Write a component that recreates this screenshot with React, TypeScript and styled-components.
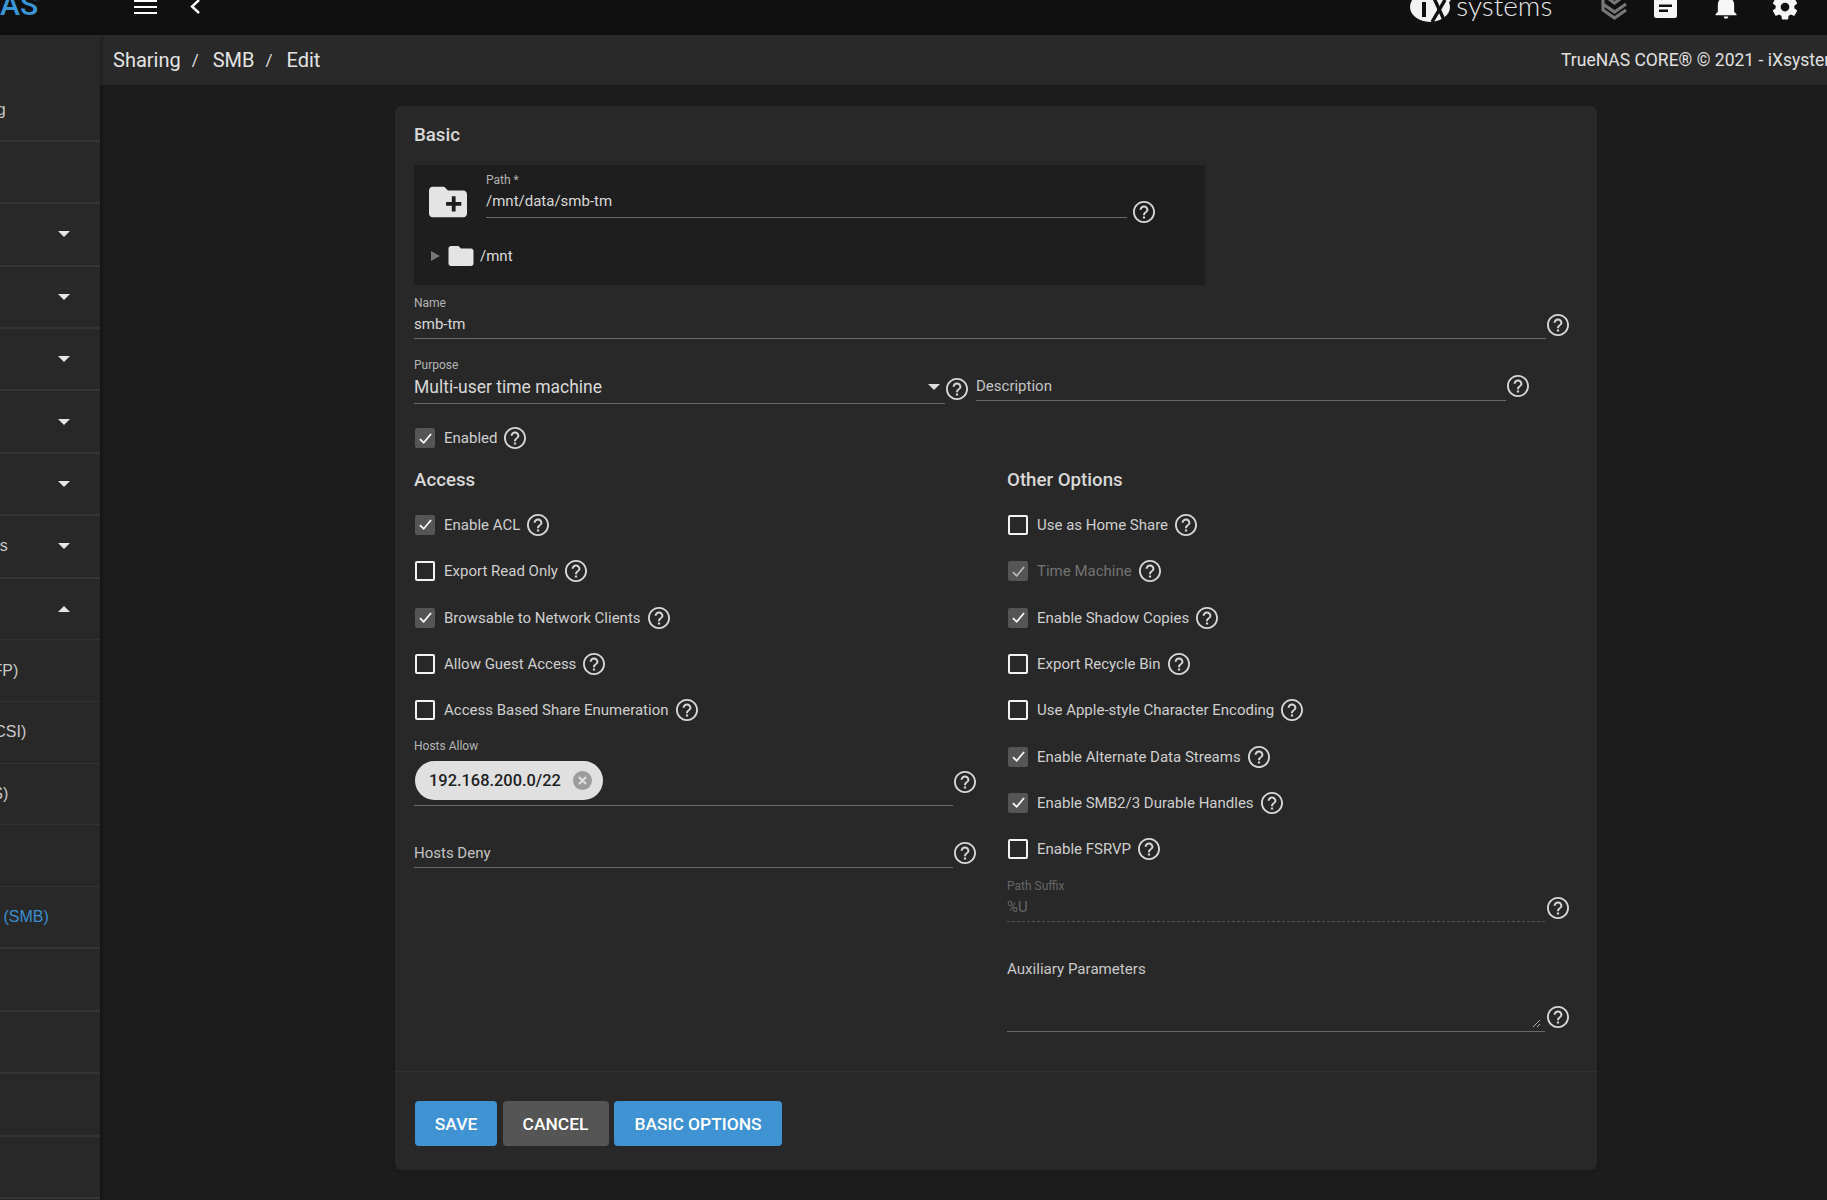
import React from "react";
import styled, { createGlobalStyle } from "styled-components";

const Global = createGlobalStyle`
  html, body { margin: 0; padding: 0; background: #1c1c1c; }
  body { font-family: Roboto, "Liberation Sans", sans-serif; color: #ccc; overflow: hidden; height: 1200px; }
  * { box-sizing: border-box; }
`;

const Page = styled.div`display: flex; flex-direction: column; width: 1827px; height: 1200px; overflow: hidden;`;

/* top bar */
const TopBar = styled.header`
  flex: none; height: 35px; background: #101010; display: flex; align-items: flex-end; overflow: hidden;
`;
const Logo = styled.div`
  width: 134px; flex: none; height: 30px; margin-bottom: 15px; font-size: 30px; line-height: 30px; font-weight: 500; color: #3b96d8;
`;
const Burger = styled.div`
  width: 23px; height: 14px; margin-bottom: 21px; flex: none; display: flex; flex-direction: column; justify-content: space-between;
  & > i { display: block; height: 2px; background: #fff; }
`;
const Back = styled.svg`width: 10px; height: 15px; margin: 0 0 21px 33px; flex: none;`;
const Spacer = styled.div`flex: 1;`;
const Brand = styled.div`display: flex; align-items: flex-end; margin-bottom: 12px; flex: none;`;
const BrandMark = styled.svg`width: 46px; height: 26px; flex: none; margin-bottom: 1px;`;
const BrandWord = styled.div`
  font-family: Lato, Roboto, sans-serif; font-weight: 300; font-size: 28px; line-height: 26px; color: #e6e6e6; margin: 0 0 5px 0;
  & > sup { font-size: 5px; vertical-align: top; line-height: 12px; }
`;
const TopIcon = styled.svg<{ $w: number; $h: number; $b: number; $l: number; $r?: number }>`
  flex: none; width: ${p => p.$w}px; height: ${p => p.$h}px; margin-bottom: ${p => p.$b}px; margin-left: ${p => p.$l}px; margin-right: ${p => p.$r ?? 0}px;
`;

/* body */
const Body = styled.div`flex: 1; display: flex; min-height: 0;`;
const Sidebar = styled.nav`
  flex: none; width: 100px; background: #282828; overflow: hidden; padding-top: 44.5px; box-shadow: 2px 0 4px rgba(0,0,0,.25); position: relative; z-index: 1;
`;
const SideList = styled.div`width: 240px; margin-left: -140px;`;
const SideRow = styled.div<{ $thin?: boolean; $indent: number; $active?: boolean }>`
  height: ${p => (p.$thin ? 61.7 : 62.4)}px; display: flex; align-items: center; justify-content: space-between; padding: 0 30px 0 ${p => p.$indent}px;
  font-family: "Liberation Sans", Arial, sans-serif; font-size: 16px; white-space: nowrap;
  color: ${p => (p.$active ? "#3b8fd0" : "#c8c8c8")};
  border-bottom: ${p => (p.$thin ? "1px solid #333" : "2px solid #343434")};
`;
const Caret = styled.i<{ $up?: boolean }>`
  display: block; width: 0; height: 0; border-left: 6.5px solid transparent; border-right: 6.5px solid transparent;
  ${p => (p.$up ? "border-bottom: 6px solid #e6e6e6;" : "border-top: 6px solid #e6e6e6;")}
`;

const Main = styled.main`flex: 1; min-width: 0; display: flex; flex-direction: column;`;
const Crumbs = styled.div`
  flex: none; height: 50px; background: #292929; display: flex; align-items: center; justify-content: space-between; padding-left: 13px; overflow: hidden; white-space: nowrap;
`;
const CrumbTrail = styled.div`display: flex; align-items: center; font-size: 20px; color: #e4e4e4;`;
const CrumbSep = styled.span`font-size: 17px; margin: 0 14px 0 11px; color: #ddd;`;
const Copy = styled.div`font-size: 17.5px; color: #e0e0e0; flex: none; width: 266px; overflow: hidden;`;

const Card = styled.section`
  width: 1202px; margin: 21px 0 0 295px; background: #282828; border-radius: 6px; box-shadow: 0 1px 3px rgba(0,0,0,.2);
`;
const FormArea = styled.div`padding: 18px 0 39px 19px;`;
const Title = styled.h3`margin: 0; font-size: 18.7px; line-height: 22px; font-weight: 500; color: #d8d8d8;`;
const PathPanel = styled.div`
  margin-top: 19px; width: 791px; height: 120px; background: #1e1e1e; padding: 8px 0 0 15px;
`;
const PathTop = styled.div`display: flex; align-items: flex-start;`;
const FolderPlus = styled.svg`width: 38px; height: 32px; flex: none; margin: 13px 19px 0 0;`;
const Tree = styled.div`display: flex; align-items: center; margin-top: 28px; font-size: 15px; color: #ddd;`;
const TreeArrow = styled.i`
  display: block; width: 0; height: 0; border-top: 5px solid transparent; border-bottom: 5px solid transparent; border-left: 9px solid #777; margin: 0 8px 0 2px;
`;
const TreeFolder = styled.svg`width: 26px; height: 20px; flex: none; margin-right: 6px;`;

const FieldRow = styled.div<{ $mt?: number }>`
  display: flex; align-items: flex-end; margin-top: ${p => p.$mt ?? 0}px;
`;
const Field = styled.div<{ $w: number; $pad?: number; $dashed?: boolean; $ml?: number }>`
  flex: none; width: ${p => p.$w}px; padding-bottom: ${p => p.$pad ?? 3}px; margin-left: ${p => p.$ml ?? 0}px;
  border-bottom: 1px ${p => (p.$dashed ? "dashed #555" : "solid #6a6a6a")};
`;
const SmallLabel = styled.div<{ $off?: boolean; $gap?: number }>`
  font-size: 12px; line-height: 14px; margin-bottom: ${p => p.$gap ?? 3}px; color: ${p => (p.$off ? "#666" : "#b4b4b4")};
`;
const Value = styled.div<{ $off?: boolean; $big?: boolean; $hint?: boolean }>`
  font-size: ${p => (p.$big ? 17.5 : 15)}px; line-height: 22px; display: flex; align-items: center; justify-content: space-between;
  color: ${p => (p.$off ? "#666" : p.$hint ? "#c4c4c4" : "#d8d8d8")};
`;
const SelectCaret = styled.i`
  display: block; width: 0; height: 0; border-left: 6px solid transparent; border-right: 6px solid transparent; border-top: 6px solid #ddd; margin-right: 5px;
`;
const HelpSvg = styled.svg<{ $l: number; $b: number }>`
  flex: none; width: 22px; height: 22px; margin-left: ${p => p.$l}px; margin-right: -1px; margin-bottom: ${p => p.$b}px;
`;
const Help: React.FC<{ l?: number; b?: number }> = ({ l = 8, b = 0 }) => (
  <HelpSvg $l={l} $b={b} viewBox="2 2 20 20" fill="#d8d8d8">
    <path d="M11 18h2v-2h-2v2zm1-16C6.48 2 2 6.48 2 12s4.48 10 10 10 10-4.48 10-10S17.52 2 12 2zm0 18.3c-4.58 0-8.3-3.72-8.3-8.3S7.42 3.7 12 3.7s8.3 3.72 8.3 8.3-3.72 8.3-8.3 8.3zM12 6c-2.21 0-4 1.79-4 4h1.8c0-1.2 1-2.2 2.2-2.2s2.2 1 2.2 2.2c0 2-3.1 1.75-3.1 5h1.8c0-2.25 3.1-2.5 3.1-5 0-2.21-1.79-4-4-4z" />
  </HelpSvg>
);

const PurposeRow = styled.div`display: flex; align-items: flex-start; margin-top: 19px;`;
const EnabledWrap = styled.div`margin-top: 11px;`;
const CheckLine = styled.div<{ $off?: boolean }>`
  display: flex; align-items: center; height: 46.33px; font-size: 15px; color: ${p => (p.$off ? "#737373" : "#cfcfcf")};
`;
const Box = styled.span<{ $on?: boolean; $off?: boolean }>`
  flex: none; width: 20px; height: 20px; border-radius: 2px; margin: 0 9px 0 1px; display: flex; align-items: center; justify-content: center;
  ${p => (p.$on ? `background: #555;` : `border: 2px solid #f2f2f2;`)}
  & > svg { width: 15px; height: 15px; opacity: ${p => (p.$off ? 0.6 : 1)}; }
`;
const Columns = styled.div`display: grid; grid-template-columns: 593px 1fr;`;
const Column = styled.div``;
const SubTitle = styled(Title)`margin-top: 8px; margin-bottom: 10.5px;`;
const Chip = styled.div`
  display: inline-flex; align-items: center; height: 39px; width: 188px; margin: 8px 0 0 1px; border-radius: 20px; background: #e0e0e0; color: #222; font-size: 16.4px; font-weight: 500; padding: 0 11px 0 14px; justify-content: space-between;
`;
const ChipX = styled.svg`width: 19px; height: 19px; flex: none;`;
const TextArea = styled.div`
  width: 538px; height: 52px; border-bottom: 1px solid #6a6a6a; display: flex; justify-content: flex-end; align-items: flex-end; padding: 0 4px 3px 0;
  & > svg { width: 9px; height: 9px; }
`;
const AuxLabel = styled.div`font-size: 15.1px; line-height: 22px; color: #c8c8c8; margin-top: 36px;`;

const Footer = styled.div`border-top: 1px solid #313131; padding: 29px 19px 24px 20px; display: flex; gap: 5.5px;`;
const Btn = styled.button<{ $w: number; $gray?: boolean }>`
  width: ${p => p.$w}px; height: 45px; border: 0; border-radius: 4px; background: ${p => (p.$gray ? "#555" : "#3f93d2")}; color: #fff;
  font-family: Roboto, sans-serif; font-size: 17.4px; font-weight: 500; text-transform: uppercase; padding: 0;
`;

const Tick = () => (
  <svg viewBox="0 0 14 14" fill="none" stroke="#fff" strokeWidth="1.6"><path d="M1.8 7.5 L5.3 11 L12.2 2.8" /></svg>
);

const Check: React.FC<{ label: string; on?: boolean; off?: boolean }> = ({ label, on, off }) => (
  <CheckLine $off={off}>
    <Box $on={on} $off={off}>{on && <Tick />}</Box>
    {label}
    <Help l={7} />
  </CheckLine>
);

const side: { t: string; i: number; thin?: boolean; c?: "d" | "u" }[] = [
  { t: "Getting Started Log", i: 7 },
  { t: "Dashboard", i: 17 },
  { t: "Accounts", i: 17, c: "d" },
  { t: "System", i: 17, c: "d" },
  { t: "Tasks", i: 17, c: "d" },
  { t: "Network", i: 17, c: "d" },
  { t: "Storage", i: 17, c: "d" },
  { t: "Directory Services", i: 18, c: "d" },
  { t: "Sharing", i: 17, c: "u", thin: true },
  { t: "Apple Shares (AFP)", i: 16, thin: true },
  { t: "Block Shares (iSCSI)", i: 16, thin: true },
  { t: "Unix Shares (NFS)", i: 14, thin: true },
  { t: "WebDAV", i: 17, thin: true },
  { t: "Windows Shares (SMB)", i: 19 },
  { t: "Services", i: 17 },
  { t: "Plugins", i: 17 },
  { t: "Jails", i: 17 },
  { t: "Reporting", i: 17 },
];

const access: [string, boolean][] = [
  ["Enable ACL", true],
  ["Export Read Only", false],
  ["Browsable to Network Clients", true],
  ["Allow Guest Access", false],
  ["Access Based Share Enumeration", false],
];
const other: [string, boolean, boolean?][] = [
  ["Use as Home Share", false],
  ["Time Machine", true, true],
  ["Enable Shadow Copies", true],
  ["Export Recycle Bin", false],
  ["Use Apple-style Character Encoding", false],
  ["Enable Alternate Data Streams", true],
  ["Enable SMB2/3 Durable Handles", true],
  ["Enable FSRVP", false],
];

export default function App() {
  return (
    <Page>
      <Global />
      <TopBar>
        <Logo>AS</Logo>
        <Burger><i /><i /><i /></Burger>
        <Back viewBox="0 0 10 15" fill="none" stroke="#fff" strokeWidth="2.4"><path d="M9 1 L2 7.5 L9 14" /></Back>
        <Spacer />
        <Brand>
          <BrandMark viewBox="0 0 46 26">
            <ellipse cx="20" cy="11" rx="20" ry="15" fill="#f2f2f2" />
            <path d="M29 -3 L46 -3 L32 16 Z" fill="#f2f2f2" />
            <rect x="12" y="6" width="4" height="15" fill="#101010" />
            <path d="M23 0 L35 26" stroke="#101010" strokeWidth="3.4" />
            <path d="M35 4 L22 26" stroke="#101010" strokeWidth="3.4" />
          </BrandMark>
          <BrandWord>systems<sup>™</sup></BrandWord>
        </Brand>
        <TopIcon $w={27} $h={28} $b={14} $l={45} viewBox="0 0 27 28" fill="none" stroke="#777" strokeWidth="3.2">
          <path d="M2 6 L2 17 L13.5 25 L25 17 M2 11 L13.5 19 L25 11 M8 6 L13.5 10 L19 6 L13.5 2 Z" />
        </TopIcon>
        <TopIcon $w={23} $h={26} $b={17} $l={26} viewBox="0 0 23 26">
          <rect x="0" y="0" width="23" height="26" rx="2.5" fill="#f6f6f6" />
          <path d="M5 12.5h13v2.4H5zM5 17.6h9v2.4H5z" fill="#101010" />
        </TopIcon>
        <TopIcon $w={28} $h={28} $b={15} $l={35} viewBox="0 0 24 24" fill="#f6f6f6">
          <path d="M21,19V20H3V19L5,17V11C5,7.9 7.03,5.17 10,4.29C10,4.19 10,4.1 10,4A2,2 0 0,1 12,2A2,2 0 0,1 14,4C14,4.1 14,4.19 14,4.29C16.97,5.17 19,7.9 19,11V17L21,19M14,21A2,2 0 0,1 12,23A2,2 0 0,1 10,21" />
        </TopIcon>
        <TopIcon $w={30} $h={30} $b={13} $l={30} $r={27} viewBox="0 0 24 24" fill="#f6f6f6">
          <path d="M12,15.5A3.5,3.5 0 0,1 8.5,12A3.5,3.5 0 0,1 12,8.5A3.5,3.5 0 0,1 15.5,12A3.5,3.5 0 0,1 12,15.5M19.43,12.97C19.47,12.65 19.5,12.33 19.5,12C19.5,11.67 19.47,11.34 19.43,11L21.54,9.37C21.73,9.22 21.78,8.95 21.66,8.73L19.66,5.27C19.54,5.05 19.27,4.96 19.05,5.05L16.56,6.05C16.04,5.66 15.5,5.32 14.87,5.07L14.5,2.42C14.46,2.18 14.25,2 14,2H10C9.75,2 9.54,2.18 9.5,2.42L9.13,5.07C8.5,5.32 7.96,5.66 7.44,6.05L4.95,5.05C4.73,4.96 4.46,5.05 4.34,5.27L2.34,8.73C2.21,8.95 2.27,9.22 2.46,9.37L4.57,11C4.53,11.34 4.5,11.67 4.5,12C4.5,12.33 4.53,12.65 4.57,12.97L2.46,14.63C2.27,14.78 2.21,15.05 2.34,15.27L4.34,18.73C4.46,18.95 4.73,19.03 4.95,18.95L7.44,17.94C7.96,18.34 8.5,18.68 9.13,18.93L9.5,21.58C9.54,21.82 9.75,22 10,22H14C14.25,22 14.46,21.82 14.5,21.58L14.87,18.93C15.5,18.67 16.04,18.34 16.56,17.94L19.05,18.95C19.27,19.03 19.54,18.95 19.66,18.73L21.66,15.27C21.78,15.05 21.73,14.78 21.54,14.63L19.43,12.97Z" />
        </TopIcon>
      </TopBar>
      <Body>
        <Sidebar>
          <SideList>
            {side.map(r => (
              <SideRow key={r.t} $thin={r.thin} $indent={r.i} $active={r.t.includes("SMB")}>
                <span>{r.t}</span>
                {r.c && <Caret $up={r.c === "u"} />}
              </SideRow>
            ))}
          </SideList>
        </Sidebar>
        <Main>
          <Crumbs>
            <CrumbTrail>
              Sharing<CrumbSep>/</CrumbSep>SMB<CrumbSep>/</CrumbSep>Edit
            </CrumbTrail>
            <Copy>TrueNAS CORE® © 2021 - iXsystems, Inc</Copy>
          </Crumbs>
          <Card>
            <FormArea>
              <Title>Basic</Title>
              <PathPanel>
                <PathTop>
                  <FolderPlus viewBox="2 4 20 16" fill="#e4e4e4">
                    <path d="M20 6h-8l-2-2H4c-1.11 0-1.99.89-1.99 2L2 18c0 1.11.89 2 2 2h16c1.11 0 2-.89 2-2V8c0-1.11-.89-2-2-2zm-1 8h-3v3h-2v-3h-3v-2h3V9h2v3h3v2z" />
                  </FolderPlus>
                  <FieldRow>
                    <Field $w={641} $pad={5}>
                      <SmallLabel>Path *</SmallLabel>
                      <Value>/mnt/data/smb-tm</Value>
                    </Field>
                    <Help l={6} b={-5} />
                  </FieldRow>
                </PathTop>
                <Tree>
                  <TreeArrow />
                  <TreeFolder viewBox="2 4 20 16" fill="#e4e4e4">
                    <path d="M10 4H4c-1.1 0-1.99.9-1.99 2L2 18c0 1.1.9 2 2 2h16c1.1 0 2-.9 2-2V8c0-1.1-.9-2-2-2h-8l-2-2z" />
                  </TreeFolder>
                  /mnt
                </Tree>
              </PathPanel>
              <FieldRow $mt={11}>
                <Field $w={1132}>
                  <SmallLabel>Name</SmallLabel>
                  <Value>smb-tm</Value>
                </Field>
                <Help l={1} b={3} />
              </FieldRow>
              <PurposeRow>
                <FieldRow>
                  <Field $w={531} $pad={5}>
                    <SmallLabel $gap={4}>Purpose</SmallLabel>
                    <Value $big>Multi-user time machine<SelectCaret /></Value>
                  </Field>
                  <Help l={1} b={4} />
                </FieldRow>
                <FieldRow $mt={17}>
                  <Field $w={530} $ml={9}>
                    <Value $hint>Description</Value>
                  </Field>
                  <Help l={1} b={4} />
                </FieldRow>
              </PurposeRow>
              <EnabledWrap>
                <Check label="Enabled" on />
              </EnabledWrap>
              <Columns>
                <Column>
                  <SubTitle>Access</SubTitle>
                  {access.map(([l, on]) => <Check key={l} label={l} on={on} />)}
                  <FieldRow $mt={5.5}>
                    <Field $w={539} $pad={5}>
                      <SmallLabel $gap={0}>Hosts Allow</SmallLabel>
                      <Chip>
                        192.168.200.0/22
                        <ChipX viewBox="0 0 19 19">
                          <circle cx="9.5" cy="9.5" r="9.5" fill="#9c9c9c" />
                          <path d="M6 6 L13 13 M13 6 L6 13" stroke="#e0e0e0" strokeWidth="2" />
                        </ChipX>
                      </Chip>
                    </Field>
                    <Help l={1} b={13} />
                  </FieldRow>
                  <FieldRow $mt={36}>
                    <Field $w={539}>
                      <Value $hint>Hosts Deny</Value>
                    </Field>
                    <Help l={1} b={4} />
                  </FieldRow>
                </Column>
                <Column>
                  <SubTitle>Other Options</SubTitle>
                  {other.map(([l, on, off]) => <Check key={l} label={l} on={on} off={off} />)}
                  <FieldRow $mt={7}>
                    <Field $w={538} $pad={3} $dashed>
                      <SmallLabel $off>Path Suffix</SmallLabel>
                      <Value $off>%U</Value>
                    </Field>
                    <Help l={2} b={3} />
                  </FieldRow>
                  <AuxLabel>Auxiliary Parameters</AuxLabel>
                  <FieldRow>
                    <TextArea>
                      <svg viewBox="0 0 9 9" stroke="#aaa" strokeWidth="1" fill="none"><path d="M1 8 L8 1 M5 8 L8 5" /></svg>
                    </TextArea>
                    <Help l={2} b={4} />
                  </FieldRow>
                </Column>
              </Columns>
            </FormArea>
            <Footer>
              <Btn $w={82}>Save</Btn>
              <Btn $w={106} $gray>Cancel</Btn>
              <Btn $w={168}>Basic Options</Btn>
            </Footer>
          </Card>
        </Main>
      </Body>
    </Page>
  );
}
